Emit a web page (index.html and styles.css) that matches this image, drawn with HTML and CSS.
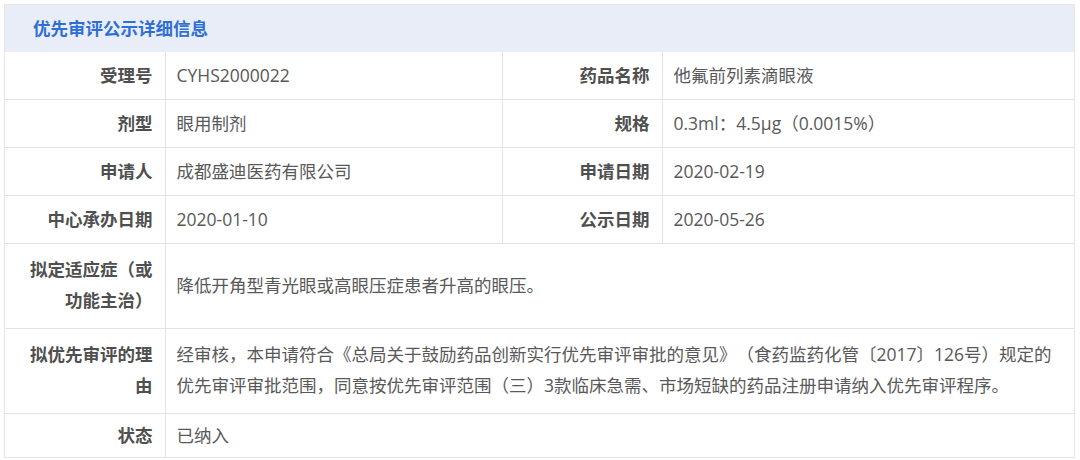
FILE: index.html
```html
<!DOCTYPE html>
<html lang="zh-CN">
<head>
    <meta charset="UTF-8">
    <meta name="viewport" content="width=device-width, initial-scale=1.0">
    <title>优先审评公示详细信息</title>
    <link rel="stylesheet" href="styles.css">
</head>
<body>
    <div class="detail-panel">
        <div class="panel-title">优先审评公示详细信息</div>
        <table class="detail-table">
            <colgroup>
                <col class="col-label">
                <col class="col-value">
                <col class="col-label">
                <col class="col-value-wide">
            </colgroup>
            <tr>
                <th>受理号</th>
                <td>CYHS2000022</td>
                <th>药品名称</th>
                <td>他氟前列素滴眼液</td>
            </tr>
            <tr>
                <th>剂型</th>
                <td>眼用制剂</td>
                <th>规格</th>
                <td>0.3ml：4.5μg（0.0015%）</td>
            </tr>
            <tr>
                <th>申请人</th>
                <td>成都盛迪医药有限公司</td>
                <th>申请日期</th>
                <td>2020-02-19</td>
            </tr>
            <tr>
                <th>中心承办日期</th>
                <td>2020-01-10</td>
                <th>公示日期</th>
                <td>2020-05-26</td>
            </tr>
            <tr class="tall">
                <th>拟定适应症（或功能主治）</th>
                <td colspan="3">降低开角型青光眼或高眼压症患者升高的眼压。</td>
            </tr>
            <tr class="tall">
                <th>拟优先审评的理由</th>
                <td colspan="3">经审核，本申请符合《总局关于鼓励药品创新实行优先审评审批的意见》（食药监药化管〔2017〕126号）规定的优先审评审批范围，同意按优先审评范围（三）3款临床急需、市场短缺的药品注册申请纳入优先审评程序。</td>
            </tr>
            <tr class="last">
                <th>状态</th>
                <td colspan="3">已纳入</td>
            </tr>
        </table>
    </div>
</body>
</html>
```

FILE: styles.css
```css
body {
    margin: 0;
    background-color: #fff;
    font-family: "Open Sans", "Noto Sans CJK SC", sans-serif;
    color: #555;
}

.detail-panel {
    width: 1069px;
    margin: 4px 0 0 4px;
    border: 1px solid #e6e6e6;
}

.panel-title {
    height: 47px;
    line-height: 47px;
    padding-left: 28px;
    background-color: #e9edf8;
    color: #2f6fd5;
    font-size: 17.5px;
    font-weight: bold;
}

.detail-table {
    width: 100%;
    border-collapse: collapse;
    table-layout: fixed;
    font-size: 17.5px;
    text-spacing-trim: space-all;
}

.col-label {
    width: 160px;
}

.col-value {
    width: 337px;
}

.detail-table th,
.detail-table td {
    border: 1px solid #e3e3e3;
    line-height: 31px;
    padding: 8px 11px;
    vertical-align: middle;
}

.detail-table tr:first-child th,
.detail-table tr:first-child td {
    border-top: none;
}

.detail-table tr:last-child th,
.detail-table tr:last-child td {
    border-bottom: none;
}

.detail-table th:first-child {
    border-left: none;
}

.detail-table td:last-child {
    border-right: none;
}

.detail-table th {
    text-align: right;
    font-weight: bold;
    color: #4f4f4f;
    padding-left: 20px;
    padding-right: 12px;
}

.detail-table td {
    text-align: left;
    color: #595959;
}

.detail-table tr.tall th,
.detail-table tr.tall td {
    padding-top: 10px;
    padding-bottom: 12px;
}

.detail-table tr.last th,
.detail-table tr.last td {
    padding-top: 6px;
    padding-bottom: 6px;
}
```
